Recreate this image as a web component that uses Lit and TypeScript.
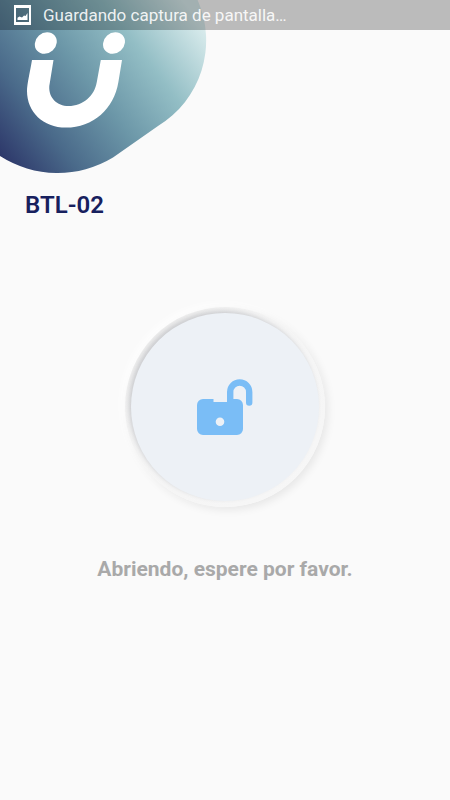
import { LitElement, html, css } from "lit";
import { customElement, property } from "lit/decorators.js";

@customElement("status-bar")
class StatusBar extends LitElement {
  @property() message = "";

  static styles = css`
    :host {
      display: flex;
      align-items: center;
      gap: 12px;
      height: 30px;
      padding: 0 14px;
      box-sizing: border-box;
      background: rgba(0, 0, 0, 0.25);
      color: rgba(255, 255, 255, 0.9);
      font-size: 17px;
      line-height: 30px;
    }
    .icon {
      flex: none;
      display: block;
    }
    .message {
      white-space: nowrap;
    }
  `;

  render() {
    return html`
      <svg class="icon" width="17" height="20" viewBox="0 0 17 20" aria-hidden="true">
        <path
          fill="#fff"
          fill-rule="evenodd"
          d="M0 0H17V20H0ZM2 3V17H15V3Z"
        />
        <path fill="#fff" d="M3.5 15V12.8L5.5 11.5L8 12.5L10 10.5L11.5 11L13.5 8V15Z" />
      </svg>
      <span class="message">${this.message}</span>
    `;
  }
}

@customElement("brand-blob")
class BrandBlob extends LitElement {
  static styles = css`
    :host,
    .art {
      display: block;
    }
  `;

  render() {
    return html`
      <svg class="art" width="207" height="174" viewBox="0 0 207 174" role="img" aria-label="Logo">
        <defs>
          <linearGradient id="sea" gradientUnits="userSpaceOnUse" x1="0" y1="154" x2="190" y2="10">
            <stop offset="0" stop-color="#2e396b" />
            <stop offset="0.22" stop-color="#4a6a8a" />
            <stop offset="0.48" stop-color="#6c97a8" />
            <stop offset="0.73" stop-color="#93bec5" />
            <stop offset="1" stop-color="#d8ebec" />
          </linearGradient>
        </defs>
        <path
          fill="url(#sea)"
          d="M0 0H197.6A100 100 0 0 1 158 126L113 157.5A107 107 0 0 1 0 156Z"
        />
        <g fill="#fff">
          <ellipse cx="45.8" cy="43" rx="11.6" ry="10.2" transform="rotate(-42 45.8 43)" />
          <ellipse cx="114" cy="43" rx="11.6" ry="10.2" transform="rotate(-42 114 43)" />
          <path
            d="M32 60H53.5L49.3 86C48.5 98 57 106 68.5 106C83 106 94.5 96 96.8 82L100.8 60H122L118.4 82C114 109 93 127.6 66 127.6C43 127.6 27 112 27 91C27 84 30 72 32 60Z"
          />
        </g>
      </svg>
    `;
  }
}

@customElement("lock-button")
class LockButton extends LitElement {
  static styles = css`
    :host {
      display: block;
    }
    .ring {
      display: block;
      width: 200px;
      height: 200px;
      padding: 6px;
      border: 0;
      border-radius: 50%;
      overflow: hidden;
      background: linear-gradient(135deg, #ededed 10%, #f4f4f4 40%, #f7f7f7);
      box-shadow:
        3px 3px 8px rgba(0, 0, 0, 0.08),
        -3px -3px 8px rgba(255, 255, 255, 0.9);
    }
    .face {
      display: grid;
      place-items: center;
      height: 100%;
      border-radius: 50%;
      background: #edf1f6;
      box-shadow: -2px -2px 4px rgba(90, 95, 110, 0.24);
    }
    .lock {
      display: block;
    }
  `;

  render() {
    return html`
      <button class="ring" type="button" aria-label="Abrir">
        <span class="face">
          <svg class="lock" width="56" height="56" viewBox="0 0 56 56" aria-hidden="true">
            <path
              fill="#7abdf6"
              fill-rule="evenodd"
              d="M6 20H16.5V23H30V13A12.7 12.7 0 0 1 55.4 13V23.5A3.2 3.2 0 0 1 49 23.5V13A6.3 6.3 0 0 0 36.4 13V20H40A6 6 0 0 1 46 26V50A6 6 0 0 1 40 56H6A6 6 0 0 1 0 50V26A6 6 0 0 1 6 20ZM23 38.5A4.3 4.3 0 1 0 23 47.1A4.3 4.3 0 1 0 23 38.5Z"
            />
          </svg>
        </span>
      </button>
    `;
  }
}

@customElement("app-root")
class AppRoot extends LitElement {
  static styles = css`
    :host {
      display: block;
      position: relative;
      min-height: 100vh;
      background: #fafafa;
      font-family: Roboto, "Liberation Sans", sans-serif;
    }
    .status {
      position: absolute;
      top: 0;
      left: 0;
      right: 0;
    }
    .title {
      margin: 17px 25px 0;
      color: #17205e;
      font-size: 24px;
      font-weight: 600;
      line-height: 28px;
    }
    .content {
      display: flex;
      flex-direction: column;
      align-items: center;
      gap: 48px;
      padding: 88px 24px 24px;
    }
    .notice {
      margin: 0;
      color: #a9a9a9;
      font-size: 21px;
      font-weight: 700;
      line-height: 28px;
      text-align: center;
    }
  `;

  render() {
    return html`
      <brand-blob></brand-blob>
      <status-bar class="status" message="Guardando captura de pantalla…"></status-bar>
      <main>
        <h1 class="title">BTL-02</h1>
        <div class="content">
          <lock-button></lock-button>
          <p class="notice" role="status">Abriendo, espere por favor.</p>
        </div>
      </main>
    `;
  }
}
